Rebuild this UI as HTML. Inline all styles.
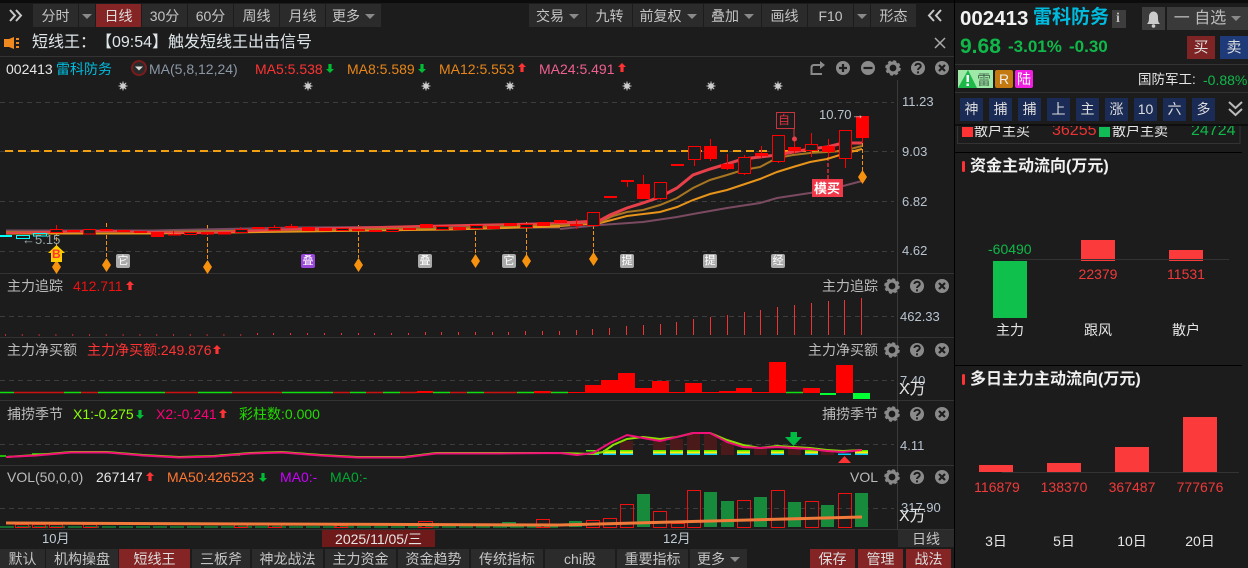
<!DOCTYPE html>
<html lang="zh"><head><meta charset="utf-8"><title>002413</title>
<style>
html,body{margin:0;padding:0;background:#1c1c1c}
#r{position:relative;width:1248px;height:568px;overflow:hidden;background:#1c1c1c;font-family:"Liberation Sans","Noto Sans CJK SC",sans-serif;font-size:14px;color:#bbb}
#r svg.c{position:absolute;left:0;top:0}
.t{position:absolute;white-space:nowrap;line-height:16px;height:16px}
.b{position:absolute;text-align:center;background:#2b2b2b;color:#c4c4c4;white-space:nowrap;font-size:14px}
.tb{top:4px;height:23px;line-height:24px}
.bt{top:549px;height:19px;line-height:21px}
.red{background:#842424;color:#ddd}
.n{top:98px;height:23px;line-height:23px;width:23px;background:#1a2b55;color:#ddd}
.tag{position:absolute;top:254px;width:14px;height:14px;line-height:14px;font-size:11px;text-align:center;background:#aaa;color:#fff;border-radius:2px}
.rr{right:370px}
.ax{color:#b8c4d0;font-size:13px}
.w{color:#e6e6e6}
.v{color:#f03a3a;font-size:14px;width:70px;text-align:center}
.l{color:#e6e6e6;width:70px;text-align:center}
.caret{display:inline-block;width:0;height:0;border:5px solid transparent;border-top:5px solid #8a8a8a;border-bottom:0;margin-left:5px;vertical-align:2px}
.h{font-weight:bold;font-size:16px;color:#f0f0f0}
</style></head><body><div id="r">
<svg class="c" width="1248" height="568" viewBox="0 0 1248 568" xmlns="http://www.w3.org/2000/svg">
<defs>
<g id="gear"><circle r="5" fill="none" stroke="#8a8a8a" stroke-width="3.2"/><circle r="7" fill="none" stroke="#8a8a8a" stroke-width="1.6" stroke-dasharray="3 2.5"/></g>
<g id="help"><circle r="7" fill="#8a8a8a"/><path d="M-2.6-2C-2.6-5 2.8-5 2.8-2C2.8 0 0 0 0 2M0 3.4V5.4" fill="none" stroke="#1c1c1c" stroke-width="1.9"/></g>
<g id="close"><circle r="7" fill="#8a8a8a"/><path d="M-3-3L3 3M3-3L-3 3" stroke="#1c1c1c" stroke-width="2.2"/></g>
<path id="up" d="M0-5L4-1H1.6V4H-1.6V-1H-4Z" fill="#f33"/>
<path id="dn" d="M0 5L4 1H1.6V-4H-1.6V1H-4Z" fill="#0b3"/>
<g id="st"><circle r="2.8" fill="#ccc"/><path d="M0-4.5V4.5M-4.5 0H4.5M-3.2-3.2L3.2 3.2M3.2-3.2L-3.2 3.2" stroke="#ccc" stroke-width="1"/></g>
<path id="dia" d="M0-7L4.5 0L0 7L-4.5 0Z" fill="#f7920f"/>
</defs>
<!-- frame -->
<rect x="0" y="0" width="1248" height="3" fill="#0c0c0c"/>
<path d="M0 56.5H954M0 273.5H954M0 337.5H954M0 400.5H954M0 465.5H954M0 529.5H954" stroke="#333"/>
<path d="M897.5 80V529" stroke="#3a3a3a"/>
<rect x="954" y="0" width="1" height="568" fill="#000"/>
<!-- grids -->
<path d="M0 102.5H894M0 151.5H894M0 201.5H894M0 251.5H894M0 316.5H894M0 380.5H894M0 444.5H894M0 508.5H894" stroke="#3d3d3d" stroke-dasharray="5 4"/>
<path d="M5 151H862" stroke="#f0a010" stroke-width="2" stroke-dasharray="8 5"/>
<!-- stars -->
<use href="#st" x="123" y="86"/><use href="#st" x="308" y="86"/><use href="#st" x="426" y="86"/><use href="#st" x="510" y="86"/><use href="#st" x="627" y="86"/><use href="#st" x="711" y="86"/><use href="#st" x="778" y="86"/>
<!-- dashed signals -->
<path d="M56.5 225V262M106.5 223V258M207.5 225V260M358.5 225V258M475.5 225V255M526.5 222V255M593.5 225V253M862.5 143V172" stroke="#f7920f" stroke-dasharray="4 2" fill="none"/>
<path d="M828 157V179" stroke="#e02a3a" stroke-width="1.5" stroke-dasharray="4 2"/>
<!-- left MA bundle -->
<path d="M6 231L150 231L300 228L450 227L560 227" stroke="#7a4a60" stroke-width="3" fill="none"/>
<path d="M6 233L150 233L300 231L450 229L560 226" stroke="#e8941a" stroke-width="3" fill="none"/>
<path d="M6 232L150 232L300 230L450 228L560 224" stroke="#a87520" stroke-width="2" fill="none"/>
<path d="M6 233L100 231L200 233L300 229L420 226L560 223" stroke="#e8404a" stroke-width="2" fill="none"/>
<!-- MA lines -->
<path d="M560 229L600 225L643 222L677 217L693 214L727 208L760 203L777 198L810 193L843 186L862 181" stroke="#7a4a60" stroke-width="2" fill="none"/>
<path d="M560 226L600 223L627 216L660 212L677 207L693 200L710 194L727 190L760 179L777 172L793 167L810 162L827 159L843 154L862 149" stroke="#e8941a" stroke-width="2" fill="none"/>
<path d="M560 225L600 222L613 216L627 212L643 210L660 205L677 198L693 188L710 180L727 175L743 170L760 167L777 158L793 155L810 153L827 152L843 151L862 146" stroke="#a87520" stroke-width="2" fill="none"/>
<path d="M560 223L599 221L610 215L627 208L643 203L660 197L677 188L693 175L710 169L727 164L743 159L760 157L777 155L793 152L810 149L827 147L843 143L862 143" stroke="#e8404a" stroke-width="3" fill="none"/>
<!-- cyan candles -->
<path d="M0 235h12v2H0z" fill="#0ff"/>
<path d="M16.5 235.5h13v3h-13zM33.5 233.5h13v2.500h-13z" fill="none" stroke="#0ff"/>
<!-- wicks -->
<path d="M56.500 225V229M173.500 231V235M240.500 227V229M274.500 225V228M291.500 224V226M576.500 219V229M627.500 182V187M643.500 175V184M660.500 198V200M694.500 159V166M710.500 139V161M727.500 154V170M744.500 155V157M744.500 173V175M761.500 146V158M778.500 161V163M794.500 140V153M811.500 133V144M811.500 150V157M828.500 139V157M845.500 158V168M862.500 138V143" stroke="#f00" fill="none"/>
<!-- filled candles -->
<path fill="#f00" d="M67 230h13v2H67zM100 229h13v2h-13zM117 230h13v2h-13zM134 231h13v2h-13zM151 232h13v5h-13zM168 234h13v1.500h-13zM201 232h13v2.500h-13zM218 232h13v2.500h-13zM252 227h13v2h-13zM285 226h13v2h-13zM302 227h13v4h-13zM319 228h13v3h-13zM352 229h13v2h-13zM369 230h13v2h-13zM403 228h13v2h-13zM420 224h13v4h-13zM453 227h13v3h-13zM487 226h13v3h-13zM504 223h13v3h-13zM537 222h13v4h-13zM554 220h13v3h-13zM570 224h13v2h-13zM604 196h13v2h-13zM621 180h13v2h-13zM637 184h13v15h-13zM671 164h13v2h-13zM704 146h13v13h-13zM721 164h13v5h-13zM755 153h13v3h-13zM788 147h13v4h-13zM822 146h13v6h-13zM856 116h13v22h-13z"/>
<!-- hollow candles -->
<path fill="#1c1c1c" stroke="#f00" d="M50.500 229.500h12v3h-12zM83.500 229.500h12v4.500h-12zM184.500 232.500h12v2h-12zM235.500 229.500h12v3h-12zM268.500 227.500h12v2.500h-12zM336.500 228.500h12v2h-12zM386.500 229.500h12v2h-12zM436.500 226.500h12v3h-12zM470.500 225.500h12v3h-12zM520.500 224.500h12v3h-12zM587.500 212.500h12v13h-12zM654.500 182.500h12v16h-12zM688.500 146.500h12v13h-12zM738.500 157.500h12v16h-12zM772.500 135.500h12v26h-12zM805.500 144.500h12v6h-12zM839.500 130.500h12v28h-12z"/>
<!-- diamonds -->
<use href="#dia" x="56.500" y="267"/><use href="#dia" x="106.500" y="265"/><use href="#dia" x="207.500" y="267"/><use href="#dia" x="358.500" y="265"/><use href="#dia" x="475.500" y="261"/><use href="#dia" x="526.500" y="261"/><use href="#dia" x="593.500" y="259"/><use href="#dia" x="862.500" y="177"/>
<!-- B arrow -->
<path d="M56.500 245L65 253H62V262H51V253H48Z" fill="#fc0"/>
<!-- zi box -->
<path d="M794 128V139" stroke="#d8343e"/><circle cx="794.500" cy="139" r="2.500" fill="#e8404a"/>
<rect x="776.500" y="112.500" width="18" height="16" fill="none" stroke="#c8343e"/>
<rect x="812" y="179" width="31" height="18" fill="#f03a4a"/>
<!-- trace bars -->
<path d="M5 335H256" stroke="#e33" stroke-width="1.500" stroke-dasharray="1 15.800"/>
<path stroke="#e33" stroke-width="1" fill="none" d="M257.500 333V335M273.500 333V335M290.500 333V335M307.500 333V335M324.500 333V335M341.500 333V335M358.500 333V335M374.500 333V335M391.500 333V335M408.500 333V335M425.500 332V335M441.500 332V335M458.500 332V335M475.500 332V335M492.500 332V335M508.500 332V335M525.500 331V335M542.500 331V335M559.500 331V335M576.500 330V335M592.500 329V335M609.500 328V335M626.500 326V335M643.500 325V335M660.500 324V335M676.500 322V335M693.500 319V335M710.500 317V335M727.500 315V335M744.500 312V335M760.500 310V335M777.500 307V335M794.500 305V335M811.500 303V335M828.500 301V335M844.500 300V335M861.500 298V335"/>
<!-- net thin line -->
<path d="M0 392.500H14M64 392.500H81M98 392.500H165M198 392.500H232M282 392.500H333M350 392.500H366M383 392.500H400M433 392.500H450M467 392.500H484M517 392.500H534M551 392.500H568M786 392.500H803" stroke="#1d1" stroke-width="1.500" fill="none"/>
<path d="M14 392.500H64M81 392.500H98M165 392.500H198M232 392.500H282M333 392.500H350M366 392.500H383M400 392.500H417M450 392.500H467M484 392.500H517M534 392.500H551" stroke="#c11" stroke-width="1.500" fill="none"/>
<path fill="#f00" d="M417 391h16v2h-16zM534 391h17v2h-17zM568 392h17v1h-17zM585 385h16v8h-16zM601 380h17v13h-17zM618 373h17v20h-17zM635 388h17v5h-17zM652 381h17v12h-17zM669 392h16v1h-16zM685 383h17v10h-17zM702 392h17v1h-17zM719 391h17v2h-17zM736 388h16v5h-16zM752 392h17v1h-17zM769 362h17v31h-17zM803 388h17v5h-17zM836 365h17v28h-17z"/>
<path fill="#0f3" d="M820 393h16v2h-16zM853 393h17v6h-17z"/>
<!-- KDJ-like -->
<path fill="#4a1a1a" d="M620 441h13v14h-13zM653 440h13v15h-13zM670 439h13v16h-13zM687 434h13v21h-13zM704 434h13v21h-13zM721 442h13v13h-13zM754 448h13v7h-13zM788 448h13v7h-13zM821 450h13v5h-13z"/>
<g id="stripes">
<path fill="#5e0" d="M586 450h13v1.500h-13zM603 450h13v1.500h-13zM620 450h13v1.500h-13zM653 450h13v1.500h-13zM670 450h13v1.500h-13zM687 450h13v1.500h-13zM704 450h13v1.500h-13zM737 450h13v1.500h-13zM771 450h13v1.500h-13zM805 450h13v1.500h-13zM855 450h13v1.500h-13z"/>
<path fill="#fe0" d="M603 451.500h13v2h-13zM620 451.500h13v2h-13zM653 451.500h13v2h-13zM670 451.500h13v2h-13zM687 451.500h13v2h-13zM704 451.500h13v2h-13zM737 451.500h13v2h-13zM771 451.500h13v2h-13zM805 451.500h13v2h-13zM855 451.500h13v2h-13z"/>
<path fill="#0cf" d="M586 453.500h13v1.500h-13zM603 453.500h13v1.500h-13zM620 453.500h13v1.500h-13zM653 453.500h13v1.500h-13zM670 453.500h13v1.500h-13zM687 453.500h13v1.500h-13zM704 453.500h13v1.500h-13zM737 453.500h13v1.500h-13zM771 453.500h13v1.500h-13zM805 453.500h13v1.500h-13zM838 453.500h13v1.500h-13zM855 453.500h13v1.500h-13z"/>
</g>
<path d="M0 456H6M32 454H46M220 455H240" stroke="#2e0" stroke-width="1.500" fill="none"/>
<path d="M6 457L36 455L71 452L107 452L143 455L179 457L214 456L250 453L282 452L321 455L357 457L404 457L436 453L500 453L560 453L593 454L603 452L613 445L627 439L643 437L660 439L677 437L693 433L710 433L727 440L743 445L760 448L777 446L793 447L810 448L827 450L843 451L862 450" stroke="#8be000" stroke-width="2" fill="none"/>
<path d="M6 457L36 455.500L71 452.500L107 452.500L143 455.500L179 457.500L214 456.500L250 453.500L282 452.500L321 455.500L357 457.500L404 457.500L436 453.500L500 453.500L560 453L577 455L593 453L610 443L627 435L643 438L660 441L677 437L693 433L710 433L727 442L743 447L760 448L777 447L793 448L810 449L827 451L843 452L862 450" stroke="#f0107a" stroke-width="2" fill="none"/>
<path d="M793.500 446L785 437H790.500V432H797V437H802Z" fill="#0b4"/>
<path d="M844.500 456L851 463H838Z" fill="#f33"/>
<!-- VOL -->
<path d="M0 527H560" stroke="#183" stroke-width="1.500" stroke-dasharray="14 3"/>
<path fill="#178a3c" d="M502 522h14v5h-14zM569 521h13v6h-13zM637 494h13v33h-13zM704 492h13v35h-13zM721 501h13v26h-13zM754 497h13v30h-13zM788 502h13v25h-13zM821 505h13v22h-13zM855 493h13v34h-13z"/>
<path fill="none" stroke="#e11" d="M15.500 524.500h13v3h-13zM32.500 524.500h13v3h-13zM49.500 524.500h13v3h-13zM83.500 524.500h13v3h-13zM234.500 524.500h13v3h-13zM268.500 524.500h13v3h-13zM334.500 525.500h13v2h-13zM418.500 521.500h14v6h-14zM536.500 519.500h13v8h-13zM586.500 520.500h13v7h-13zM603.500 518.500h13v9h-13zM620.500 504.500h13v23h-13zM653.500 511.500h13v16h-13zM671.500 523.500h13v4h-13zM687.500 490.500h13v37h-13zM737.500 500.500h13v27h-13zM771.500 490.500h13v37h-13zM805.500 501.500h13v26h-13zM838.500 493.500h13v34h-13z"/>
<path d="M6 523L260 524L560 525L862 517" stroke="#f07a3a" stroke-width="3" fill="none"/>
<!-- panel icons -->
<g id="p1"><use href="#gear" x="892" y="286"/><use href="#help" x="917" y="286"/><use href="#close" x="942" y="286"/></g>
<use href="#gear" x="892" y="350"/><use href="#help" x="917" y="350"/><use href="#close" x="942" y="350"/>
<use href="#gear" x="892" y="414"/><use href="#help" x="917" y="414"/><use href="#close" x="942" y="414"/>
<use href="#gear" x="892" y="477"/><use href="#help" x="917" y="477"/><use href="#close" x="942" y="477"/>
<use href="#gear" x="893" y="68"/><use href="#help" x="918" y="68"/><use href="#close" x="942" y="68"/>
<circle cx="843" cy="68" r="7" fill="#8a8a8a"/><path d="M839 68H847M843 64V72" stroke="#1c1c1c" stroke-width="2.200"/>
<circle cx="868" cy="68" r="7" fill="#8a8a8a"/><path d="M863.500 68H872.500" stroke="#1c1c1c" stroke-width="2.200"/>
<path d="M822 65H814Q811.500 65 811.500 68V74H822" fill="none" stroke="#8a8a8a" stroke-width="2"/><path d="M820 61L825 65L820 69Z" fill="#8a8a8a"/>
<!-- legend arrows -->
<use href="#dn" x="330" y="68"/><use href="#dn" x="422" y="68"/><use href="#up" x="522" y="68"/><use href="#up" x="622" y="68"/>
<use href="#up" x="130" y="286"/><use href="#up" x="217" y="350"/><use href="#dn" x="140" y="414"/><use href="#up" x="223" y="414"/><use href="#up" x="150" y="477"/><use href="#dn" x="263" y="477"/>
<!-- MA circle -->
<circle cx="139" cy="68" r="7" fill="#2a2a2a" stroke="#7a1c1c" stroke-width="2"/><path d="M135 66.500H143L139 70.500Z" fill="#ddd"/>
<!-- chevrons -->
<path d="M10 10L15 15.500L10 21M16 10L21 15.500L16 21" fill="none" stroke="#c8c8c8" stroke-width="2"/>
<path d="M934 10L929 15.500L934 21M941 10L936 15.500L941 21" fill="none" stroke="#c8c8c8" stroke-width="2"/>
<path d="M935 38L945 48M945 38L935 48" stroke="#aaa" stroke-width="1.500"/>
<!-- speaker -->
<path d="M4 39H9L14 37V49L9 47H4Z" fill="#f08a20"/><path d="M16 38h3v2h-3zM16 42h3v2h-3zM16 46h3v2h-3z" fill="#f08a20"/>
<!-- right panel lines -->
<path d="M955 64.500H1248M955 92.500H1248" stroke="#333"/>
<path d="M955 125H1248M955 152.500H1242M955 365.500H1242" stroke="#000"/>
<path d="M957.500 126V143.500H1240V126" stroke="#333" fill="none"/>
<path d="M962 127h11v10h-11z" fill="#f33"/><path d="M1099 127h11v10h-11z" fill="#1b5"/>
<rect x="962" y="161" width="3" height="11" rx="1.500" fill="#f33"/><rect x="962" y="374" width="3" height="11" rx="1.500" fill="#f33"/>
<!-- bell -->
<rect x="1142" y="7" width="23" height="23" fill="#3d3d3d"/>
<path d="M1147 24C1149 22 1149 20 1149 17C1149 13.500 1151 11.500 1153.500 11.500C1156 11.500 1158 13.500 1158 17C1158 20 1158 22 1160 24Z" fill="#ccc"/><circle cx="1153.500" cy="26" r="1.800" fill="#ccc"/>
<rect x="1112" y="10" width="14" height="18" fill="#3d3d3d"/>
<!-- risk tags -->
<rect x="958" y="70" width="35" height="18" fill="#9ee8a8"/>
<path d="M958 88L968 70L977 88Z" fill="#1cb84a"/><path d="M966.500 75h2.500v7h-2.500zM966.500 83.500h2.500v2.500h-2.500z" fill="#fff"/>
<!-- right chevrons -->
<path d="M1229 102L1235.500 108L1242 102M1229 109L1235.500 115L1242 109" fill="none" stroke="#bbb" stroke-width="2"/>
<!-- right bars -->
<rect x="993" y="261" width="34" height="57" fill="#10c04c"/>
<path d="M1014 259.500H1229" stroke="#333"/>
<path fill="#fb3b3b" d="M1081 240h34v19h-34zM1081 260h34v1h-34zM1169 250h34v9h-34zM1169 260h34v1h-34zM979 465h34v7h-34zM1047 463h34v9h-34zM1115 447h34v25h-34zM1183 417h34v55h-34z"/>
<path d="M1002 472.500H1239" stroke="#333"/>
</svg>

<!-- toolbar -->
<div class="b tb" style="left:33px;width:45px">分时</div>
<div class="b tb" style="left:79px;width:16px"><span class="caret" style="margin:0"></span></div>
<div class="b tb red" style="left:96px;width:45px">日线</div>
<div class="b tb" style="left:142px;width:45px">30分</div>
<div class="b tb" style="left:188px;width:45px">60分</div>
<div class="b tb" style="left:234px;width:45px">周线</div>
<div class="b tb" style="left:280px;width:45px">月线</div>
<div class="b tb" style="left:326px;width:55px">更多<span class="caret"></span></div>
<div class="b tb" style="left:529px;width:57px">交易<span class="caret"></span></div>
<div class="b tb" style="left:587px;width:45px">九转</div>
<div class="b tb" style="left:633px;width:70px">前复权<span class="caret"></span></div>
<div class="b tb" style="left:704px;width:57px">叠加<span class="caret"></span></div>
<div class="b tb" style="left:762px;width:45px">画线</div>
<div class="b tb" style="left:808px;width:45px">F10</div>
<div class="b tb" style="left:854px;width:16px"><span class="caret" style="margin:0"></span></div>
<div class="b tb" style="left:871px;width:45px">形态</div>

<div class="t" style="left:32px;top:35px;font-size:16px;color:#dfe6ea;text-spacing-trim:space-all;font-kerning:none">短线王：【09:54】触发短线王出击信号</div>

<!-- legend main -->
<div class="t w" style="left:6px;top:61px">002413</div>
<div class="t" style="left:56px;top:61px;color:#0bd">雷科防务</div>
<div class="t" style="left:149px;top:61px;color:#8a97a5">MA(5,8,12,24)</div>
<div class="t" style="left:255px;top:61px;color:#f33">MA5:5.538</div>
<div class="t" style="left:347px;top:61px;color:#e8861a">MA8:5.589</div>
<div class="t" style="left:439px;top:61px;color:#e8861a">MA12:5.553</div>
<div class="t" style="left:539px;top:61px;color:#f0608f">MA24:5.491</div>

<div class="t ax" style="left:902px;top:94px">11.23</div>
<div class="t ax" style="left:902px;top:144px">9.03</div>
<div class="t ax" style="left:902px;top:194px">6.82</div>
<div class="t ax" style="left:902px;top:243px">4.62</div>
<div class="t ax" style="left:819px;top:107px">10.70→</div>
<div class="t" style="left:22px;top:232px;font-size:13px;color:#9aa">←5.15</div>
<div class="t" style="left:52px;top:246px;font-size:12px;font-weight:bold;color:#f33">B</div>
<div class="t" style="left:778px;top:112px;font-size:12px;color:#d8343e">自</div>
<div class="t" style="left:814px;top:181px;font-size:13px;font-weight:bold;color:#fff">模买</div>

<div class="tag" style="left:116px">它</div>
<div class="tag" style="left:301px;background:#9a46d8">叠</div>
<div class="tag" style="left:418px">叠</div>
<div class="tag" style="left:502px">它</div>
<div class="tag" style="left:620px">提</div>
<div class="tag" style="left:703px">提</div>
<div class="tag" style="left:771px">经</div>

<!-- panel legends -->
<div class="t" style="left:7px;top:278px">主力追踪</div>
<div class="t" style="left:73px;top:278px;color:#e11">412.711</div>
<div class="t rr" style="top:278px">主力追踪</div>
<div class="t ax" style="left:900px;top:309px">462.33</div>

<div class="t" style="left:7px;top:342px">主力净买额</div>
<div class="t" style="left:87px;top:342px;color:#f33">主力净买额:249.876</div>
<div class="t rr" style="top:342px">主力净买额</div>
<div class="t ax" style="left:900px;top:373px">7.40</div>
<div class="t w" style="left:899px;top:382px;font-size:16px">X万</div>

<div class="t" style="left:7px;top:406px">捕捞季节</div>
<div class="t" style="left:73px;top:406px;color:#8f0">X1:-0.275</div>
<div class="t" style="left:156px;top:406px;color:#f07">X2:-0.241</div>
<div class="t" style="left:239px;top:406px;color:#2d0">彩柱数:0.000</div>
<div class="t rr" style="top:406px">捕捞季节</div>
<div class="t ax" style="left:900px;top:438px">4.11</div>

<div class="t" style="left:7px;top:469px">VOL(50,0,0)</div>
<div class="t w" style="left:96px;top:469px">267147</div>
<div class="t" style="left:167px;top:469px;color:#f73">MA50:426523</div>
<div class="t" style="left:280px;top:469px;color:#c0f">MA0:-</div>
<div class="t" style="left:330px;top:469px;color:#0a3">MA0:-</div>
<div class="t rr" style="top:469px">VOL</div>
<div class="t ax" style="left:901px;top:500px">317.90</div>
<div class="t w" style="left:899px;top:509px;font-size:16px">X万</div>

<!-- date row -->
<div class="t" style="left:42px;top:531px;font-size:13px;color:#c0ccd6">10月</div>
<div class="b" style="left:322px;top:530px;width:113px;height:17px;line-height:18px;background:#6e1a1a;color:#e6e6e6">2025/11/05/三</div>
<div class="t" style="left:663px;top:531px;font-size:13px;color:#c0ccd6">12月</div>
<div class="b" style="left:898px;top:530px;width:56px;height:17px;line-height:18px;background:#2b2b2b">日线</div>

<!-- tabs -->
<div class="b bt" style="left:0;width:45px">默认</div>
<div class="b bt" style="left:46px;width:72px">机构操盘</div>
<div class="b bt red" style="left:119px;width:71px">短线王</div>
<div class="b bt" style="left:192px;width:58px">三板斧</div>
<div class="b bt" style="left:252px;width:71px">神龙战法</div>
<div class="b bt" style="left:325px;width:71px">主力资金</div>
<div class="b bt" style="left:398px;width:71px">资金趋势</div>
<div class="b bt" style="left:471px;width:72px">传统指标</div>
<div class="b bt" style="left:545px;width:70px">chi股</div>
<div class="b bt" style="left:617px;width:71px">重要指标</div>
<div class="b bt" style="left:690px;width:57px">更多<span class="caret"></span></div>
<div class="b bt red" style="left:810px;width:45px">保存</div>
<div class="b bt red" style="left:858px;width:45px">管理</div>
<div class="b bt red" style="left:906px;width:45px">战法</div>

<!-- right header -->
<div class="t" style="left:960px;top:9px;height:20px;line-height:20px;font-size:20.500px;font-weight:bold;color:#f2f2f2">002413</div>
<div class="t" style="left:1033px;top:8px;height:20px;line-height:20px;font-size:19px;font-weight:bold;color:#0bd">雷科防务</div>
<div class="t" style="left:1116px;top:11px;font-family:'Liberation Serif',serif;font-size:14px;font-weight:bold;color:#bbb">i</div>
<div class="b" style="left:1167px;top:7px;width:81px;height:23px;line-height:23px;background:#3a3a3a;font-size:16px;color:#bbb">一 自选<span class="caret"></span></div>
<div class="t" style="left:960px;top:37px;height:20px;line-height:20px;font-size:21px;font-weight:bold;color:#10b84a">9.68</div>
<div class="t" style="left:1008px;top:38px;height:18px;line-height:18px;font-size:17px;font-weight:bold;color:#10b84a">-3.01%</div>
<div class="t" style="left:1069px;top:38px;height:18px;line-height:18px;font-size:17px;font-weight:bold;color:#10b84a">-0.30</div>
<div class="b" style="left:1187px;top:36px;width:28px;height:23px;line-height:23px;background:#7f2424;color:#ddd;font-size:15px">买</div>
<div class="b" style="left:1220px;top:36px;width:28px;height:23px;line-height:23px;background:#1f3a78;color:#ddd;font-size:15px">卖</div>
<div class="t" style="left:977px;top:72px;color:#4a6a50">雷</div>
<div class="b" style="left:995px;top:70px;width:18px;height:18px;line-height:18px;background:#c47a10;color:#eee;border-radius:2px">R</div>
<div class="b" style="left:1015px;top:70px;width:18px;height:18px;line-height:18px;background:#f020e0;color:#fff;border-radius:2px">陆</div>
<div class="t w" style="left:1138px;top:72px;font-size:13.500px">国防军工:</div>
<div class="t" style="left:1203px;top:72px;color:#10b84a">-0.88%</div>
<div class="b n" style="left:960px">神</div><div class="b n" style="left:989px">捕</div><div class="b n" style="left:1018px">捕</div><div class="b n" style="left:1047px">上</div><div class="b n" style="left:1076px">主</div><div class="b n" style="left:1105px">涨</div><div class="b n" style="left:1134px">10</div><div class="b n" style="left:1163px">六</div><div class="b n" style="left:1192px">多</div>

<div style="position:absolute;left:955px;top:126px;width:293px;height:17px;overflow:hidden">
<div class="t w" style="left:19px;top:-3px">散户主买</div>
<div class="t" style="left:97px;top:-3px;font-size:16px;color:#e33">36255</div>
<div class="t w" style="left:157px;top:-3px">散户主卖</div>
<div class="t" style="left:236px;top:-3px;font-size:16px;color:#10b84a">24724</div>
</div>

<div class="t h" style="left:970px;top:159px">资金主动流向(万元)</div>
<div class="t" style="left:988px;top:241px;color:#10b84a">-60490</div>
<div class="t v" style="left:1063px;top:266px">22379</div>
<div class="t v" style="left:1151px;top:266px">11531</div>
<div class="t l" style="left:975px;top:322px">主力</div>
<div class="t l" style="left:1063px;top:322px">跟风</div>
<div class="t l" style="left:1151px;top:322px">散户</div>

<div class="t h" style="left:970px;top:372px">多日主力主动流向(万元)</div>
<div class="t v" style="left:962px;top:479px">116879</div>
<div class="t v" style="left:1029px;top:479px">138370</div>
<div class="t v" style="left:1097px;top:479px">367487</div>
<div class="t v" style="left:1165px;top:479px">777676</div>
<div class="t l" style="left:961px;top:533px">3日</div>
<div class="t l" style="left:1029px;top:533px">5日</div>
<div class="t l" style="left:1097px;top:533px">10日</div>
<div class="t l" style="left:1165px;top:533px">20日</div>
</div></body></html>
